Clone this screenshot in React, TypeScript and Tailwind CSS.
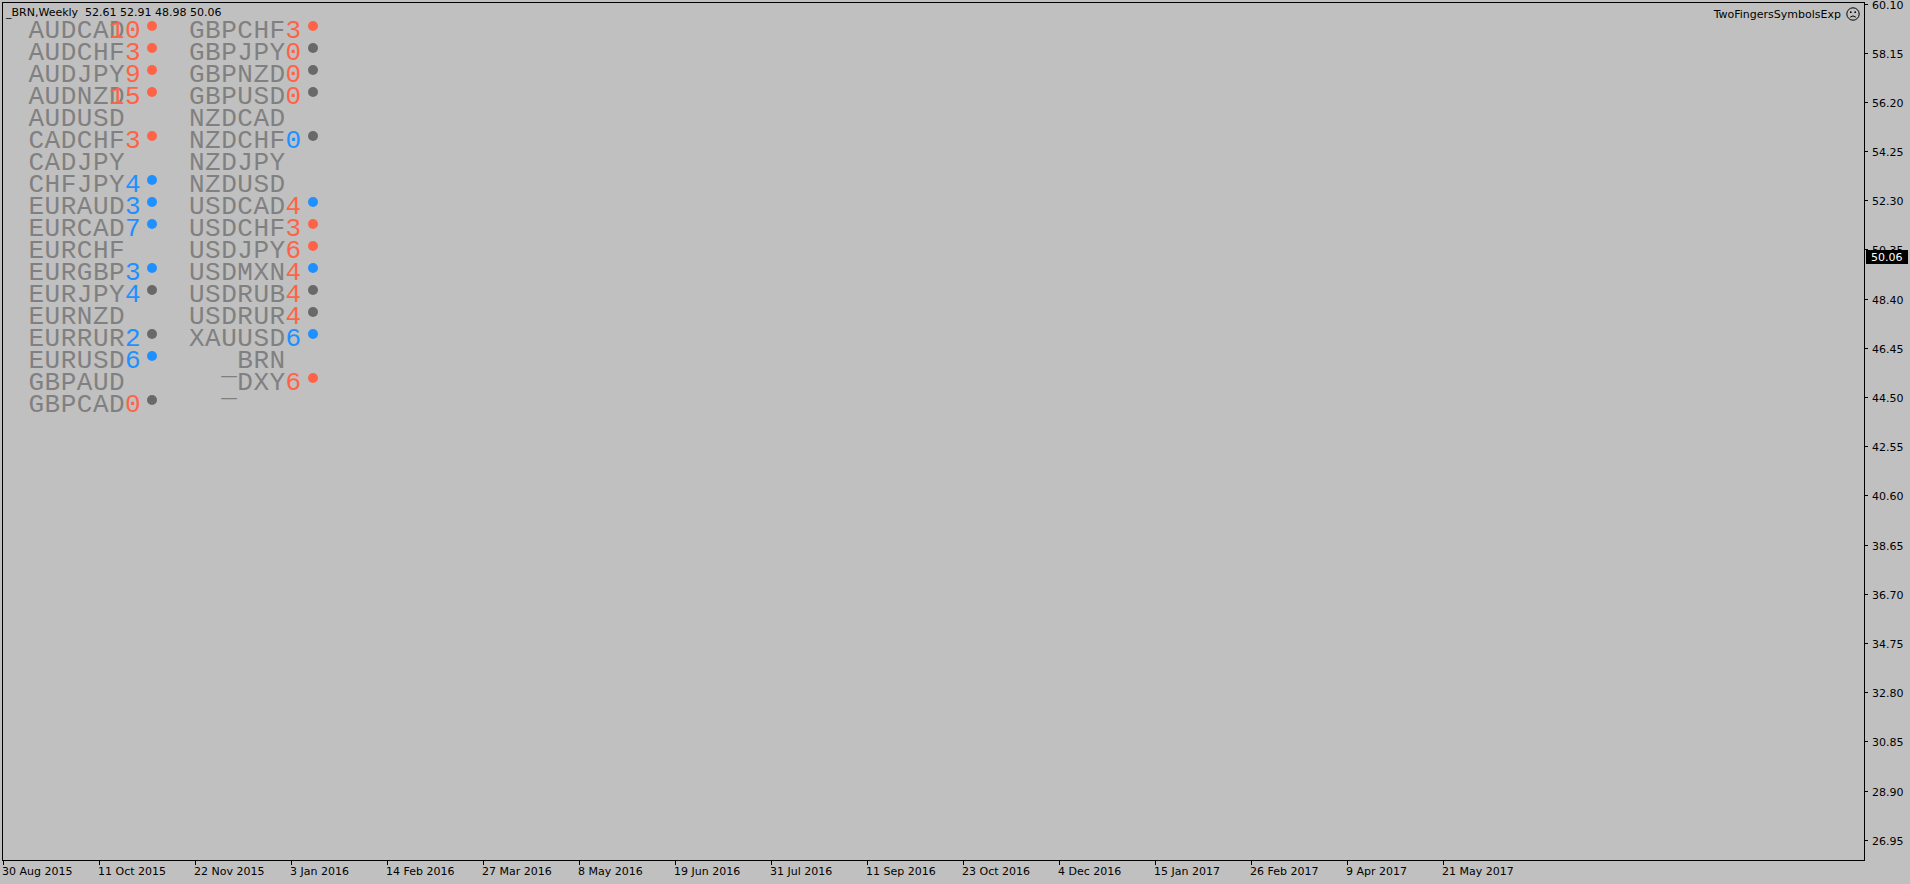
import React from 'react';

type C = 'r' | 'b' | 'g';
type Row = [string, string?, C?, C?];

const col1: Row[] = [
  ['AUDCAD', '10', 'r', 'r'],
  ['AUDCHF', '3', 'r', 'r'],
  ['AUDJPY', '9', 'r', 'r'],
  ['AUDNZD', '15', 'r', 'r'],
  ['AUDUSD'],
  ['CADCHF', '3', 'r', 'r'],
  ['CADJPY'],
  ['CHFJPY', '4', 'b', 'b'],
  ['EURAUD', '3', 'b', 'b'],
  ['EURCAD', '7', 'b', 'b'],
  ['EURCHF'],
  ['EURGBP', '3', 'b', 'b'],
  ['EURJPY', '4', 'b', 'g'],
  ['EURNZD'],
  ['EURRUR', '2', 'b', 'g'],
  ['EURUSD', '6', 'b', 'b'],
  ['GBPAUD'],
  ['GBPCAD', '0', 'r', 'g'],
];

const col2: Row[] = [
  ['GBPCHF', '3', 'r', 'r'],
  ['GBPJPY', '0', 'r', 'g'],
  ['GBPNZD', '0', 'r', 'g'],
  ['GBPUSD', '0', 'r', 'g'],
  ['NZDCAD'],
  ['NZDCHF', '0', 'b', 'g'],
  ['NZDJPY'],
  ['NZDUSD'],
  ['USDCAD', '4', 'r', 'b'],
  ['USDCHF', '3', 'r', 'r'],
  ['USDJPY', '6', 'r', 'r'],
  ['USDMXN', '4', 'r', 'b'],
  ['USDRUB', '4', 'r', 'g'],
  ['USDRUR', '4', 'r', 'g'],
  ['XAUUSD', '6', 'b', 'b'],
  ['_BRN'],
  ['_DXY', '6', 'r', 'r'],
];

const textCls: Record<C, string> = {
  r: 'text-[#ff6347]',
  b: 'text-[#1e90ff]',
  g: 'text-[#696969]',
};
const bgCls: Record<C, string> = {
  r: 'bg-[#ff6347]',
  b: 'bg-[#1e90ff]',
  g: 'bg-[#696969]',
};

const prices = [
  '60.10', '58.15', '56.20', '54.25', '52.30', '50.35', '48.40', '46.45', '44.50',
  '42.55', '40.60', '38.65', '36.70', '34.75', '32.80', '30.85', '28.90', '26.95',
];

const dates = [
  '30 Aug 2015', '11 Oct 2015', '22 Nov 2015', '3 Jan 2016', '14 Feb 2016', '27 Mar 2016',
  '8 May 2016', '19 Jun 2016', '31 Jul 2016', '11 Sep 2016', '23 Oct 2016', '4 Dec 2016',
  '15 Jan 2017', '26 Feb 2017', '9 Apr 2017', '21 May 2017',
];

function Name({ name }: { name: string }) {
  if (name.startsWith('_')) {
    return (
      <>
        <span className="inline-block translate-y-[6px]">_</span>
        {name.slice(1)}
      </>
    );
  }
  return <>{name}</>;
}

function SymbolRow({ row }: { row: Row }) {
  const [name, num, nc, dc] = row;
  return (
    <div className="grid grid-cols-[96.6px_16.1px_20px] h-[22px] leading-[22px]">
      <span className="col-start-1 row-start-1 text-right whitespace-pre text-[#808080]">
        <Name name={name} />
      </span>
      {num && nc && (
        <span className={`col-start-1 col-span-2 row-start-1 text-right ${textCls[nc]}`}>{num}</span>
      )}
      {dc && (
        <span className={`col-start-3 row-start-1 ml-[6px] mt-[1px] w-[10px] h-[10px] rounded-full ${bgCls[dc]}`} />
      )}
    </div>
  );
}

function SadFace() {
  return (
    <svg width="14" height="14" viewBox="0 0 14 14" fill="none">
      <circle cx="7" cy="7" r="6.2" stroke="#000" strokeWidth="1" />
      <circle cx="4.8" cy="5.2" r="0.9" fill="#000" />
      <circle cx="9.2" cy="5.2" r="0.9" fill="#000" />
      <path d="M4.2 10.2 Q7 7.6 9.8 10.2" stroke="#000" strokeWidth="1" fill="none" />
    </svg>
  );
}

export default function App() {
  return (
    <div className="w-[1910px] h-[884px] bg-[#c0c0c0] flex flex-col overflow-hidden font-['DejaVu_Sans',sans-serif] text-[11px] text-black">
      <div className="flex h-[861px] pt-[2px] shrink-0">
        {/* chart */}
        <div className="ml-[2px] w-[1863px] h-[859px] border border-black relative">
          <div className="pl-[3px] pt-[3px] leading-[13px] whitespace-pre">_BRN,Weekly  52.61 52.91 48.98 50.06</div>
          <div className="flex pl-[25.5px] mt-[1px] font-['Liberation_Mono',monospace] text-[26px] tracking-[0.5px]">
            <div className="w-[160.5px] flex flex-col">
              {col1.map((r, i) => (
                <SymbolRow key={i} row={r} />
              ))}
            </div>
            <div className="w-[160.5px] flex flex-col">
              {col2.map((r, i) => (
                <SymbolRow key={i} row={r} />
              ))}
            </div>
          </div>
          <div className="absolute top-[3px] right-[4px] flex items-center gap-[5px]">
            <span className="leading-[13px] mt-[2px]">TwoFingersSymbolsExp</span>
            <SadFace />
          </div>
        </div>
        {/* price axis */}
        <div className="relative w-[45px] h-[859px] pt-[2px]">
          <div className="h-[836.4px] flex flex-col justify-between">
            {prices.map((p) => (
              <div key={p} className="h-0 flex items-center">
                <div className="w-[3px] h-px bg-black" />
                <span className="ml-[4px] leading-[13px] mt-[2px]">{p}</span>
              </div>
            ))}
          </div>
          <div className="absolute left-[1px] top-[248px] w-[42px] h-[14px] bg-black text-white flex items-center pl-[5px] leading-[13px]">
            50.06
          </div>
        </div>
      </div>
      {/* date axis */}
      <div className="flex pl-[3px]">
        {dates.map((d) => (
          <div key={d} className="w-[96px] shrink-0 flex flex-col">
            <div className="w-px h-[4px] bg-black" />
            <span className="-ml-[1px] leading-[13px] whitespace-pre">{d}</span>
          </div>
        ))}
      </div>
    </div>
  );
}
